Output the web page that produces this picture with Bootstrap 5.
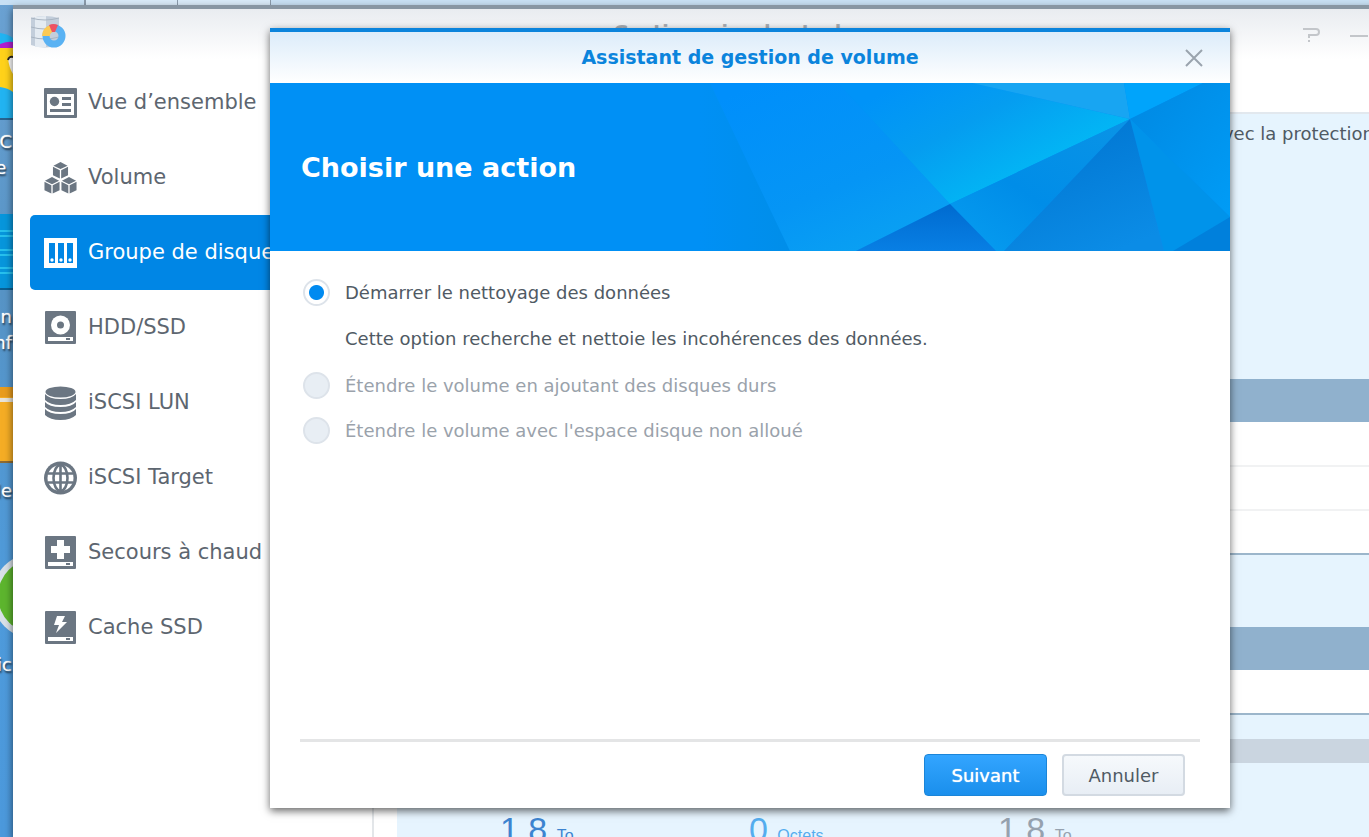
<!DOCTYPE html>
<html lang="fr">
<head>
<meta charset="utf-8">
<meta name="viewport" content="width=device-width, initial-scale=1">
<title>Gestionnaire de stockage</title>
<link href="https://cdn.jsdelivr.net/npm/bootstrap@5.3.0/dist/css/bootstrap.min.css" rel="stylesheet">
<style>
body{font-family:"DejaVu Sans",sans-serif;color:#505a64;background:#5b9bd0;font-size:18px}
.desktop{background:linear-gradient(#6ba2d3,#5794c6 35%,#4f9bdb 70%,#4c99dc)}
.taskbar{height:5px;background:#c8e0f4}
.taskbar span{width:93px;background:#d9eaf8;border:solid #8b9bab;border-width:0 1px}
.tile{position:absolute;left:0;width:13px;overflow:hidden}
.tile-text{position:absolute;right:calc(100% - 12px);white-space:nowrap;color:#fff;text-shadow:1px 2px 2px #234,0 0 1px #fff;line-height:26px;text-align:right}
.app-win{position:absolute;top:5px;left:13px;right:-118px;bottom:0;background:#fff;border-top:4px solid #8896a3;box-shadow:0 4px 8px rgba(0,0,0,.6)}
.app-head{height:50px;flex:none;background:linear-gradient(#e9ecf0,#fff);padding:0 20px 4px 17px}
.app-title{font-size:19px;color:#a8adb3}
.tool{width:24px;height:24px;border:0;background:none;padding:0;color:#c3c6ca}
.app-body{min-height:0}
.side{width:361px;padding:6px 17px 0;border-right:2px solid #e3e6e9}
.side a{height:75px;padding-left:14px;gap:11px;font-size:21px;color:#5d6670;text-decoration:none;border-radius:5px}
.side a.active{background:#0086e5;color:#fff}
.side svg{width:33px;height:34px;flex:none}
.main-col{padding:53px 24px 0 23px}
.panel{background:#e6f4fe;border-top:2px solid #e2e8ee}
.note{height:265px;padding:6px 89px 0 0}
.grid-table{width:100%;background:#fff;border-bottom:2px solid #9cb6cb}
.grid-table.second{margin:72px 0 24px}
.grid-table th{height:43px;background:#90b1cd}
.grid-table td{height:44px;border-bottom:2px solid #f1f2f3}
.grid-table tr:last-child td{border-bottom:0}
.usage{height:24px;background:#cad5e0}
.stats{font-family:"Liberation Sans",sans-serif;padding:46px 0 0 103px}
.stats div{width:249px;font-size:34px;line-height:40px;white-space:nowrap;color:#96a2af}
.stats .total{color:#3d84d0}
.stats .used{color:#55adee}
.stats small{font-size:16px}
.wizard-layer{position:absolute;inset:19px 0 29px;padding:0 16px}
.wizard{width:100%;max-width:960px;background:#fff;border-top:4px solid #0b84dc;box-shadow:0 3px 8px rgba(0,0,0,.6)}
.wiz-head{height:51px;background:linear-gradient(#dcecfa,#fff)}
.wiz-title{font-size:19px;color:#0b84dc}
.wiz-close{position:absolute;right:24px;border:0;background:none;padding:0;line-height:0}
.banner{height:168px;background:#0090f5;padding:2px 0 0 31px}
.banner svg{position:absolute;right:0;top:0;height:100%;width:530px}
.banner h2{font-size:27px;color:#fff;z-index:1}
.wiz-body{padding:26px 33px}
.wiz-body input{width:27px;height:27px;margin:0;flex:none;border:2px solid #dde3ea}
.wiz-body input:checked{background:#fff radial-gradient(circle,#008af0 7px,#fff 8px);border-color:#dde3ea}
.wiz-body input:disabled,.wiz-body input:disabled+label{opacity:1}
.wiz-body input:disabled{background:#e8eef4}
.opt{gap:15px;height:30px}
.opt+.opt{margin-top:15px}
.opt input:disabled+label{color:#9aa2ab}
.desc{margin:17px 0 16px 42px;line-height:30px}
.wiz-foot{margin:0 30px;padding:12px 15px 12px 0;border-top:3px solid #e4e5e6;gap:15px}
.wiz-foot button{width:123px;height:42px;font-size:18px;border-radius:4px;padding:0}
.go{background:linear-gradient(#33a5ff,#1a8fec);border:1px solid #1b85d8;color:#fff;text-shadow:0 0 1px #fff}
.no{background:linear-gradient(#f6f9fc,#e8eef5);border:2px solid #d3dae2;color:#505a64}
</style>
</head>
<body class="vh-100 overflow-hidden">
<div class="desktop position-relative h-100 overflow-hidden">
  <div class="taskbar d-flex"><span class="border-start-0 bg-transparent" style="width:85px"></span><span></span><span class="border-start-0"></span></div>
  <svg class="tile" style="top:30px" height="90" viewBox="0 0 13 90"><path d="M0 3Q8 4 13 8V89H0Z" fill="#22b4f2"/><path d="M0 14Q8 11 13 12V18H0Z" fill="#b01fd0"/><path d="M0 18H13V62Q8 58 0 57Z" fill="#ffd21a"/><path d="M8 28Q10 26 13 28V44Q9 38 8 28Z" fill="#fff"/><path d="M8 30Q9 26 13 27" fill="none" stroke="#222" stroke-width="2"/><path d="M0 89H13" stroke="#28638f" stroke-width="2"/></svg>
  <div class="tile-text" style="top:129px">C<br>e&nbsp;</div>
  <svg class="tile" style="top:214px" height="76" viewBox="0 0 13 76"><path d="M0 0H13V75H0Z" fill="#0796dc"/><path d="M0 75H13" stroke="#0b5f91" stroke-width="2"/><path d="M0 17H13M0 22H13M0 36H13M0 41H13M0 54H13M0 59H13" stroke="#27c0ee" stroke-width="2"/></svg>
  <div class="tile-text" style="top:304px">n<br>nf</div>
  <svg class="tile" style="top:387px" height="76" viewBox="0 0 13 76"><path d="M0 0H13V75H0Z" fill="#f5ad25"/><path d="M0 0H13V10H0Z" fill="#e99c1c"/><path d="M0 13H13" stroke="#e8e4da" stroke-width="4"/><path d="M0 75H13" stroke="#8d6b32" stroke-width="2"/></svg>
  <div class="tile-text" style="top:478px">le</div>
  <svg class="tile" style="top:552px" height="90" viewBox="0 0 13 90"><circle cx="35" cy="44" r="43" fill="#d9e1e8"/><circle cx="35" cy="44" r="37" fill="#5db52e"/></svg>
  <div class="tile-text" style="top:652px">.ic</div>

  <div class="app-win d-flex flex-column">
    <header class="app-head d-flex align-items-center position-relative">
      <svg width="38" height="36" viewBox="0 0 38 36"><path d="M1 4Q15 0 29 4V31Q15 36 1 31Z" fill="#c3cedb"/><path d="M5 3V33H16V2Z" fill="#e4ebf2"/><path d="M1 4Q15 8 29 4M1 13Q15 17 29 13M1 23Q15 27 29 23" fill="none" stroke="#a9b5c2"/><circle cx="24" cy="22" r="8" fill="none" stroke="#59b2f3" stroke-width="7"/><path d="M12 22A12 12 0 0 1 20 11L23 18A4 4 0 0 0 20 22Z" fill="#fcca55"/><path d="M19 11A12 12 0 0 1 28 11L25 18H22Z" fill="#ee5261"/></svg>
      <div class="app-title fw-bold position-absolute start-50 translate-middle-x">Gestionnaire de stockage</div>
      <div class="d-flex gap-4 ms-auto">
        <button class="tool" aria-label="Aide"><svg width="24" height="24" viewBox="0 0 24 24"><path d="M4 6H17Q20 6 20 9T17 12H10V15M10 17V19" fill="none" stroke="currentColor" stroke-width="2"/></svg></button>
        <button class="tool" aria-label="Réduire"><svg width="24" height="24" viewBox="0 0 24 24"><path d="M3 13H21" stroke="currentColor" stroke-width="2"/></svg></button>
        <button class="tool" aria-label="Agrandir"></button>
        <button class="tool" aria-label="Fermer"></button>
      </div>
    </header>
    <div class="app-body d-flex flex-fill">
      <nav class="side d-flex flex-column flex-shrink-0">
        <a href="#" class="d-flex align-items-center"><svg viewBox="0 0 33 34" fill="#6b7682"><path fill-rule="evenodd" d="M1 2H32Q33 2 33 3V31Q33 32 32 32H1Q0 32 0 31V3Q0 2 1 2ZM3 8V29H30V8Z"/><circle cx="10.500" cy="15.500" r="4.700"/><path d="M18 11H27V14H18ZM18 17H27V20H18ZM6 23H27V26H6Z"/></svg>Vue d’ensemble</a>
        <a href="#" class="d-flex align-items-center"><svg viewBox="0 0 35 34" fill="#6b7682"><g id="cube"><path d="M17.500 0L25 4L17.500 7.500L10 4Z"/><path d="M9.500 5L16.800 8.800V17.500L9.500 14ZM25.500 5L18.200 8.800V17.500L25.500 14Z"/></g><use href="#cube" x="-9" y="16"/><use href="#cube" x="9" y="16"/></svg>Volume</a>
        <a href="#" class="active d-flex align-items-center"><svg viewBox="0 0 33 34" fill="#fff"><path fill-rule="evenodd" d="M0 2H33V32H0ZM5 7V27H11V7ZM14 7V27H20V7ZM23 7V27H29V7Z"/><circle cx="8" cy="24" r="1.700"/><circle cx="17" cy="24" r="1.700"/><circle cx="26" cy="24" r="1.700"/></svg>Groupe de disques</a>
        <a href="#" class="d-flex align-items-center"><svg viewBox="0 0 33 34"><rect x="1" width="31" height="33" rx="1" fill="#6b7682"/><circle cx="16.500" cy="14" r="9.500" fill="#fff"/><circle cx="16.500" cy="14" r="3.500" fill="#6b7682"/><path d="M4 26H29V30H4Z" fill="#fff"/><path d="M22 28H26" stroke="#6b7682" stroke-width="2"/></svg>HDD/SSD</a>
        <a href="#" class="d-flex align-items-center"><svg viewBox="0 0 33 34" fill="#6b7682"><ellipse cx="16.500" cy="6" rx="15" ry="5.500"/><path d="M1 8Q5 13 16.500 13T32 8V14Q27 19 16.500 19T1 14ZM1 16Q5 21 16.500 21T32 16V21Q27 26 16.500 26T1 21ZM1 23Q5 28 16.500 28T32 23V29Q27 34 16.500 34T1 29Z"/></svg>iSCSI LUN</a>
        <a href="#" class="d-flex align-items-center"><svg viewBox="0 0 33 34"><circle cx="16.500" cy="17" r="16.500" fill="#6b7682"/><circle cx="16.500" cy="17" r="13" fill="#fff"/><g fill="none" stroke="#6b7682" stroke-width="2.600"><ellipse cx="16.500" cy="17" rx="7" ry="13"/><path d="M16.500 3V31M4 12.500H29M4 21.500H29"/></g></svg>iSCSI Target</a>
        <a href="#" class="d-flex align-items-center"><svg viewBox="0 0 33 34"><rect x="1" width="31" height="33" rx="1" fill="#6b7682"/><path d="M13 4H20V10H26V17H20V23H13V17H7V10H13ZM4 26H29V30H4Z" fill="#fff"/><path d="M22 28H26" stroke="#6b7682" stroke-width="2"/></svg>Secours à chaud</a>
        <a href="#" class="d-flex align-items-center"><svg viewBox="0 0 33 34"><rect x="1" width="31" height="33" rx="1" fill="#6b7682"/><path d="M13 5H21L18 11H23L12 22L15 14H10ZM4 26H29V30H4Z" fill="#fff"/><path d="M22 28H26" stroke="#6b7682" stroke-width="2"/></svg>Cache SSD</a>
      </nav>
      <main class="main-col flex-fill">
        <div class="panel h-100">
          <div class="note text-end">avec la protection</div>
          <table class="grid-table"><thead><tr><th></th></tr></thead><tbody><tr><td></td></tr><tr><td></td></tr><tr><td></td></tr></tbody></table>
          <table class="grid-table second"><thead><tr><th></th></tr></thead><tbody><tr><td></td></tr></tbody></table>
          <div class="usage"></div>
          <div class="stats d-flex">
            <div class="total">1.8 <small>To</small></div><div class="used">0 <small>Octets</small></div><div>1.8 <small>To</small></div>
          </div>
        </div>
      </main>
    </div>

    <div class="wizard-layer d-flex justify-content-center">
      <section class="wizard d-flex flex-column" role="dialog" aria-labelledby="wizTitle">
        <header class="wiz-head position-relative d-flex align-items-center justify-content-center">
          <h1 id="wizTitle" class="wiz-title fw-bold m-0">Assistant de gestion de volume</h1>
          <button class="wiz-close" aria-label="Fermer"><svg width="24" height="24" viewBox="0 0 24 24"><path d="M4 4L20 20M20 4L4 20" stroke="#9aa4ae" stroke-width="2"/></svg></button>
        </header>
        <div class="banner position-relative d-flex align-items-center">
          <svg viewBox="0 0 530 168" preserveAspectRatio="none">
            <defs>
              <linearGradient id="a" x2="1"><stop offset="0" stop-color="#0090f5"/><stop offset="1" stop-color="#008ee9"/></linearGradient>
              <linearGradient id="b" x1=".2" y1="0" x2=".8" y2="1"><stop offset="0" stop-color="#008ffb"/><stop offset=".6" stop-color="#0595f5"/><stop offset="1" stop-color="#0aa2f2"/></linearGradient>
              <linearGradient id="c" gradientUnits="userSpaceOnUse" x1="200" y1="0" x2="270" y2="130"><stop offset="0" stop-color="#0093f8"/><stop offset=".45" stop-color="#059df0"/><stop offset="1" stop-color="#02b8f5"/></linearGradient>
              <linearGradient id="d" x1="1" y1="0" x2=".1" y2="1"><stop offset="0" stop-color="#0a94e6"/><stop offset=".6" stop-color="#008de8"/><stop offset="1" stop-color="#069cf0"/></linearGradient>
              <linearGradient id="e" x1=".2" y1="0" x2=".7" y2="1"><stop offset="0" stop-color="#0074d0"/><stop offset="1" stop-color="#0b8ce6"/></linearGradient>
              <linearGradient id="f" y2="1" x2="0"><stop offset="0" stop-color="#006bd0"/><stop offset="1" stop-color="#087fe4"/></linearGradient>
              <linearGradient id="g" x2="1" y2="1"><stop offset="0" stop-color="#0088e2"/><stop offset="1" stop-color="#009cf6"/></linearGradient>
            </defs>
            <path d="M0 0H10L90 168H0Z" fill="url(#a)"/>
            <path d="M10 0H138L250 121L156 168H90Z" fill="url(#b)"/>
            <path d="M138 0H272L430 36L250 121Z" fill="url(#c)"/>
            <path d="M272 0H424L430 36Z" fill="#18a5f2"/>
            <path d="M424 0H503L430 36Z" fill="#00a4fb"/>
            <path d="M503 0H530V134L430 36Z" fill="url(#g)"/>
            <path d="M430 36L530 134V135L477 168H464Z" fill="#0093ea"/>
            <path d="M430 36L250 121L296 168H304Z" fill="url(#d)"/>
            <path d="M430 36L464 168H304Z" fill="url(#e)"/>
            <path d="M250 121L296 168H156Z" fill="url(#f)"/>
            <path d="M530 134V168H473Z" fill="#0080dc"/>
          </svg>
          <h2 class="fw-bold m-0">Choisir une action</h2>
        </div>
        <div class="wiz-body flex-fill">
          <div class="opt d-flex align-items-center"><input class="form-check-input" type="radio" name="act" id="o1" checked><label for="o1">Démarrer le nettoyage des données</label></div>
          <p class="desc">Cette option recherche et nettoie les incohérences des données.</p>
          <div class="opt d-flex align-items-center"><input class="form-check-input" type="radio" name="act" id="o2" disabled><label for="o2">Étendre le volume en ajoutant des disques durs</label></div>
          <div class="opt d-flex align-items-center"><input class="form-check-input" type="radio" name="act" id="o3" disabled><label for="o3">Étendre le volume avec l'espace disque non alloué</label></div>
        </div>
        <footer class="wiz-foot d-flex justify-content-end">
          <button class="go">Suivant</button><button class="no">Annuler</button>
        </footer>
      </section>
    </div>
  </div>
</div>
<script src="https://cdn.jsdelivr.net/npm/bootstrap@5.3.0/dist/js/bootstrap.bundle.min.js"></script>
</body>
</html>
